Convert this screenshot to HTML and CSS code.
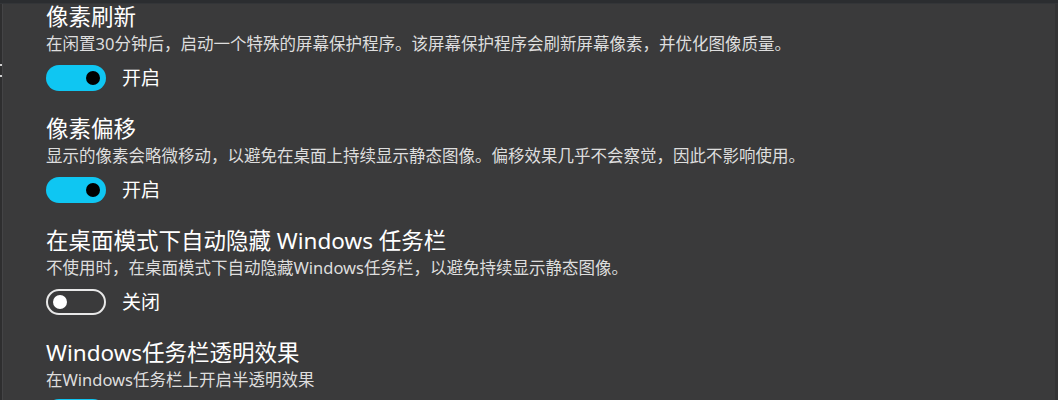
FILE: index.html
```html
<!DOCTYPE html>
<html lang="zh-CN">
<head>
<meta charset="utf-8">
<link rel="stylesheet" href="styles.css">
</head>
<body>
<div class="topbar"></div>
<div class="main">
  <div class="edge"><span class="mark"></span><span class="mark m2"></span></div>
  <div class="content">
    <section class="setting">
      <h2 class="title">像素刷新</h2>
      <p class="desc">在闲置30分钟后，启动一个特殊的屏幕保护程序。该屏幕保护程序会刷新屏幕像素，并优化图像质量。</p>
      <div class="row"><span class="toggle on"><span class="knob"></span></span><span class="label">开启</span></div>
    </section>
    <section class="setting">
      <h2 class="title">像素偏移</h2>
      <p class="desc">显示的像素会略微移动，以避免在桌面上持续显示静态图像。偏移效果几乎不会察觉，因此不影响使用。</p>
      <div class="row"><span class="toggle on"><span class="knob"></span></span><span class="label">开启</span></div>
    </section>
    <section class="setting">
      <h2 class="title">在桌面模式下自动隐藏 Windows 任务栏</h2>
      <p class="desc">不使用时，在桌面模式下自动隐藏Windows任务栏，以避免持续显示静态图像。</p>
      <div class="row"><span class="toggle off"><span class="knob"></span></span><span class="label">关闭</span></div>
    </section>
    <section class="setting">
      <h2 class="title">Windows任务栏透明效果</h2>
      <p class="desc">在Windows任务栏上开启半透明效果</p>
      <div class="row last"><span class="toggle on"><span class="knob"></span></span></div>
    </section>
  </div>
</div>
</body>
</html>
```

FILE: styles.css
```css
html, body {
  margin: 0;
  padding: 0;
  height: 400px;
  overflow: hidden;
}
body {
  background: #3a3a3b;
  font-family: "Noto Sans", "Noto Sans CJK SC", sans-serif;
  color: #ffffff;
}
.topbar {
  height: 3px;
  background: #2b2d30;
  border-bottom: 1px solid #333538;
}
.main {
  display: flex;
  height: 396px;
  border-right: 3px solid #333334;
}
.edge {
  width: 2px;
  background: #2e2e2f;
  border-right: 1px solid #444446;
  display: flex;
  flex-direction: column;
  padding-top: 60px;
  gap: 9px;
}
.mark {
  display: block;
  width: 2px;
  height: 2px;
  background: #d0d0d0;
}
.content {
  flex: 1;
  padding-left: 43px;
}
.setting {
  height: 112px;
}
.title {
  margin: 0;
  height: 27px;
  font-size: 22.5px;
  font-weight: 400;
  line-height: 26px;
  color: #ffffff;
  white-space: nowrap;
}
.desc {
  margin: 0;
  height: 26px;
  font-size: 16.5px;
  line-height: 26px;
  color: #dedede;
  white-space: nowrap;
}
.row {
  display: flex;
  align-items: center;
  gap: 16px;
  margin-top: 8px;
  height: 26px;
}
.row.last {
  margin-top: 6px;
}
.toggle {
  box-sizing: border-box;
  width: 60px;
  height: 26px;
  border-radius: 13px;
  display: flex;
  align-items: center;
  padding: 0 6px;
}
.toggle.on {
  background: #0fc6f2;
  justify-content: flex-end;
}
.toggle.off {
  border: 2px solid #e8e8e8;
  justify-content: flex-start;
  padding: 0 5px;
}
.knob {
  width: 14px;
  height: 14px;
  border-radius: 50%;
}
.toggle.on .knob {
  background: #000000;
}
.toggle.off .knob {
  background: #ffffff;
}
.label {
  font-size: 19px;
  line-height: 26px;
  color: #ffffff;
}
```
